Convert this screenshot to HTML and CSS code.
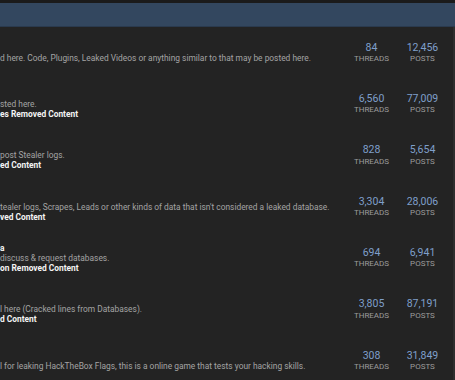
FILE: index.html
```html
<!DOCTYPE html>
<html lang="en">
<head>
  <meta charset="UTF-8" />
  <meta name="viewport" content="width=device-width, initial-scale=1.0"/>
  <title>Forums</title>
  <link rel="stylesheet" href="styles.css">
</head>
<body>

  <div class="topbar"></div>
  <div class="cat-head"></div>

  <div class="forums">
    <div class="row">
      <div class="node">
        <div class="title">&nbsp;</div>
        <div class="desc">d here. Code, Plugins, Leaked Videos or anything similar to that may be posted here.</div>
      </div>
      <div class="stat"><span class="num">84</span><span class="lbl">Threads</span></div>
      <div class="stat"><span class="num">12,456</span><span class="lbl">Posts</span></div>
    </div>

    <div class="row">
      <div class="node">
        <div class="title">&nbsp;</div>
        <div class="desc">sted here.</div>
        <div class="mods">es Removed Content</div>
      </div>
      <div class="stat"><span class="num">6,560</span><span class="lbl">Threads</span></div>
      <div class="stat"><span class="num">77,009</span><span class="lbl">Posts</span></div>
    </div>

    <div class="row">
      <div class="node">
        <div class="title">&nbsp;</div>
        <div class="desc">post Stealer logs.</div>
        <div class="mods">ed Content</div>
      </div>
      <div class="stat"><span class="num">828</span><span class="lbl">Threads</span></div>
      <div class="stat"><span class="num">5,654</span><span class="lbl">Posts</span></div>
    </div>

    <div class="row">
      <div class="node">
        <div class="title">&nbsp;</div>
        <div class="desc">tealer logs, Scrapes, Leads or other kinds of data that isn't considered a leaked database.</div>
        <div class="mods">ved Content</div>
      </div>
      <div class="stat"><span class="num">3,304</span><span class="lbl">Threads</span></div>
      <div class="stat"><span class="num">28,006</span><span class="lbl">Posts</span></div>
    </div>

    <div class="row">
      <div class="node">
        <div class="title">a</div>
        <div class="desc">discuss &amp; request databases.</div>
        <div class="mods">on Removed Content</div>
      </div>
      <div class="stat"><span class="num">694</span><span class="lbl">Threads</span></div>
      <div class="stat"><span class="num">6,941</span><span class="lbl">Posts</span></div>
    </div>

    <div class="row">
      <div class="node">
        <div class="title">&nbsp;</div>
        <div class="desc">l here (Cracked lines from Databases).</div>
        <div class="mods">d Content</div>
      </div>
      <div class="stat"><span class="num">3,805</span><span class="lbl">Threads</span></div>
      <div class="stat"><span class="num">87,191</span><span class="lbl">Posts</span></div>
    </div>

    <div class="row">
      <div class="node">
        <div class="title">&nbsp;</div>
        <div class="desc">l for leaking HackTheBox Flags, this is a online game that tests your hacking skills.</div>
      </div>
      <div class="stat"><span class="num">308</span><span class="lbl">Threads</span></div>
      <div class="stat"><span class="num">31,849</span><span class="lbl">Posts</span></div>
    </div>
  </div>

</body>
</html>
```

FILE: styles.css
```css
body {
  margin: 0;
  background-color: #232323;
  font-family: Roboto, "Liberation Sans", sans-serif;
  overflow: hidden;
}

.topbar {
  height: 3px;
  background-color: #1b1b1b;
}

.cat-head {
  height: 23px;
  background-color: #33475f;
  border-bottom: 1px solid #2a3a4e;
}

.forums {
  border-right: 2px solid #2e2e2e;
  padding-right: 5px;
}

.row {
  display: flex;
  align-items: center;
  height: 51.33px;
}

.node {
  flex: 1;
  min-width: 0;
  line-height: 10px;
}

.title,
.mods {
  color: #f4f4f4;
  font-size: 8.4px;
  font-weight: bold;
}

.desc {
  color: #a4a4a4;
  font-size: 8.4px;
  white-space: nowrap;
}

.stat {
  width: 51px;
  display: flex;
  flex-direction: column;
  align-items: center;
}

.num {
  color: #7f9fca;
  font-size: 10.5px;
  line-height: 12.4px;
}

.lbl {
  color: #9c9c9c;
  font-size: 8px;
  line-height: 9.4px;
  text-transform: uppercase;
}
```
